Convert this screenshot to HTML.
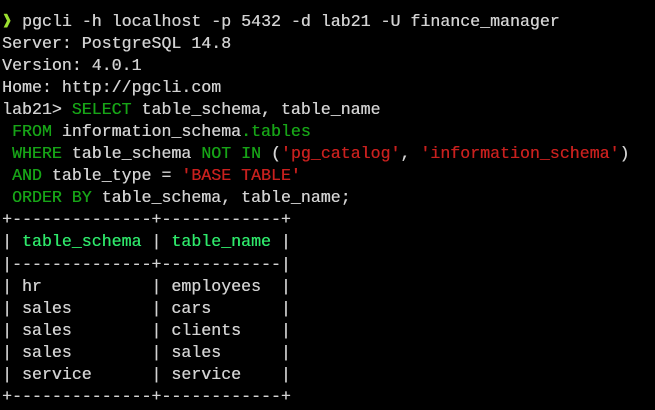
<!DOCTYPE html>
<html><head><style>
html,body{margin:0;padding:0;background:#000;width:655px;height:410px;overflow:hidden}
pre{margin:0;position:absolute;left:2px;top:11px;font-family:"Liberation Mono",monospace;font-size:16.6px;line-height:22.05px;color:#d2d2d2;text-shadow:0.3px 0 0 currentColor}
.k{color:#17a317}.s{color:#c8201e}.h{color:#2ee86a}.p{color:#9be030;font-weight:bold}
</style></head><body>
<pre><span class="p">❱</span> pgcli -h localhost -p 5432 -d lab21 -U finance_manager
Server: PostgreSQL 14.8
Version: 4.0.1
Home: http://pgcli.com
lab21&gt; <span class="k">SELECT</span> table_schema, table_name
 <span class="k">FROM</span> information_schema<span class="k">.tables</span>
 <span class="k">WHERE</span> table_schema <span class="k">NOT IN</span> (<span class="s">'pg_catalog'</span>, <span class="s">'information_schema'</span>)
 <span class="k">AND</span> table_type = <span class="s">'BASE TABLE'</span>
 <span class="k">ORDER BY</span> table_schema, table_name;
+--------------+------------+
| <span class="h">table_schema</span> | <span class="h">table_name</span> |
|--------------+------------|
| hr           | employees  |
| sales        | cars       |
| sales        | clients    |
| sales        | sales      |
| service      | service    |
+--------------+------------+</pre>
</body></html>
